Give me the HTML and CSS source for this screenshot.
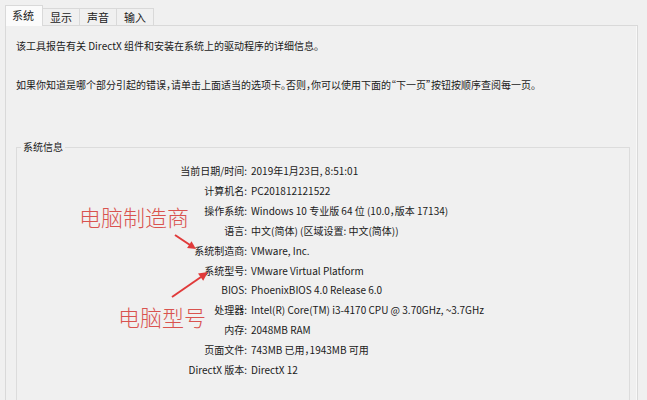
FILE: index.html
```html
<!DOCTYPE html>
<html lang="zh-CN">
<head>
    <meta charset="UTF-8">
    <title>DirectX 诊断工具</title>
    <link rel="stylesheet" href="styles.css">
</head>
<body>
    <div class="tabs">
        <div class="tab active">系统</div>
        <div class="tab">显示</div>
        <div class="tab">声音</div>
        <div class="tab">输入</div>
    </div>

    <div class="panel">
        <p class="intro">该工具报告有关 DirectX 组件和安装在系统上的驱动程序的详细信息。</p>
        <p class="intro">如果你知道是哪个部分引起的错误，请单击上面适当的选项卡。否则，你可以使用下面的“下一页”按钮按顺序查阅每一页。</p>

        <fieldset class="group">
            <legend>系统信息</legend>
            <div class="info">
                <span class="label">当前日期/时间:</span><span class="value">2019年1月23日, 8:51:01</span>
                <span class="label">计算机名:</span><span class="value">PC201812121522</span>
                <span class="label">操作系统:</span><span class="value">Windows 10 专业版 64 位 (10.0，版本 17134)</span>
                <span class="label">语言:</span><span class="value">中文(简体) (区域设置: 中文(简体))</span>
                <span class="label">系统制造商:</span><span class="value">VMware, Inc.</span>
                <span class="label">系统型号:</span><span class="value">VMware Virtual Platform</span>
                <span class="label">BIOS:</span><span class="value">PhoenixBIOS 4.0 Release 6.0</span>
                <span class="label">处理器:</span><span class="value">Intel(R) Core(TM) i3-4170 CPU @ 3.70GHz, ~3.7GHz</span>
                <span class="label">内存:</span><span class="value">2048MB RAM</span>
                <span class="label">页面文件:</span><span class="value">743MB 已用，1943MB 可用</span>
                <span class="label">DirectX 版本:</span><span class="value">DirectX 12</span>
            </div>
        </fieldset>
    </div>

    <!-- red notes drawn over the screenshot -->
    <div class="notes">
        <span class="note note-maker">电脑制造商</span>
        <span class="note note-model">电脑型号</span>
        <svg class="arrows" width="647" height="400">
            <line x1="175" y1="235" x2="190" y2="245" stroke="#e03a3a" stroke-width="2"/>
            <polygon points="196,249 187.1,247.9 191.5,241.3" fill="#e03a3a"/>
            <line x1="172" y1="297" x2="201" y2="277" stroke="#e03a3a" stroke-width="2"/>
            <polygon points="208,272 203.2,280.8 198,273.4" fill="#e03a3a"/>
        </svg>
    </div>
</body>
</html>
```

FILE: styles.css
```css
html, body {
    height: 100%;
}

body {
    margin: 0;
    display: flex;
    flex-direction: column;
    background-color: #f0f0f0;
    font-family: "Noto Sans CJK SC", "Noto Sans", sans-serif;
    font-size: 10px;
    color: #1a1a1a;
    overflow: hidden;
    position: relative;
}

.tabs {
    display: flex;
    align-items: flex-end;
    height: 25px;
    flex-shrink: 0;
    padding-left: 5px;
    position: relative;
    z-index: 1;
    font-size: 11px;
}

.tab {
    height: 16px;
    line-height: 16px;
    padding: 0 7px;
    border: 1px solid #d9d9d9;
    border-bottom: none;
    border-left: none;
    background-color: #f0f0f0;
}

.tab.active {
    height: 19px;
    line-height: 19px;
    padding: 0 8px 1px 6px;
    margin-bottom: -1px;
    border-left: 1px solid #d9d9d9;
    background-color: #fbfbfb;
}

.panel {
    flex: 1;
    min-height: 0;
    display: flex;
    flex-direction: column;
    margin: 0 9px 0 5px;
    padding: 10px 7px 0 10px;
    border: 1px solid #d9d9d9;
    border-bottom: none;
    box-shadow: inset -1px 0 0 #f8f8f8;
}

.intro {
    margin: 0 0 19px;
    line-height: 20px;
    font-feature-settings: "halt";
}

.group {
    flex: 1;
    min-width: 0;
    margin: 23px 0 0;
    padding: 4px 0 0;
    border: 1px solid #dcdcdc;
    border-bottom: none;
}

.group legend {
    margin-left: 4px;
    padding: 0 2px;
    line-height: 20px;
}

.info {
    display: grid;
    grid-template-columns: 230px 1fr;
    column-gap: 4px;
    line-height: 19.9px;
}

.label {
    text-align: right;
}

.value {
    font-feature-settings: "halt";
}

.notes {
    position: absolute;
    top: 0;
    left: 0;
    width: 647px;
    height: 400px;
    pointer-events: none;
}

.note {
    position: absolute;
    font-size: 22px;
    line-height: 26px;
    color: #d9534f;
    font-weight: 300;
}

.note-maker {
    left: 79px;
    top: 203px;
}

.note-model {
    left: 118px;
    top: 303px;
}

.arrows {
    position: absolute;
    top: 0;
    left: 0;
}
```
